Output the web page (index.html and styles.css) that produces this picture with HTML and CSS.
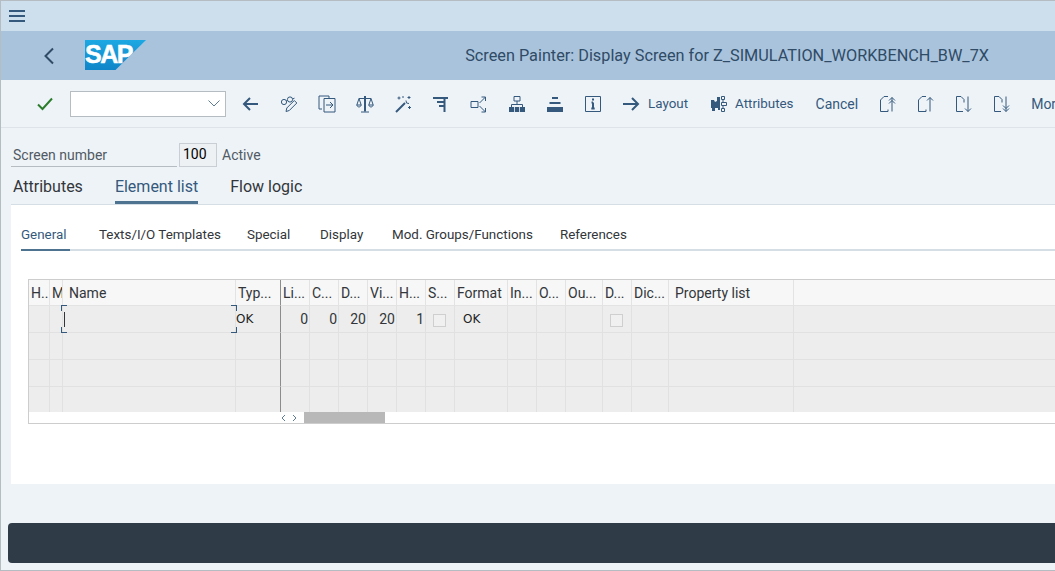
FILE: index.html
```html
<!DOCTYPE html>
<html lang="en">
<head>
  <meta charset="UTF-8" />
  <title>Screen Painter</title>
  <link rel="stylesheet" href="styles.css">
</head>
<body>

  <div class="menu-bar">
    <svg class="hamburger" width="16" height="12" viewBox="0 0 16 12"><path d="M0 1h16M0 6h16M0 11h16" /></svg>
  </div>

  <div class="title-bar">
    <svg class="nav-back" width="12" height="18" viewBox="0 0 12 18"><path d="M10 1.5 2.5 9l7.5 7.5" /></svg>
    <div class="logo"><span>SAP</span></div>
    <div class="title">Screen Painter: Display Screen for Z_SIMULATION_WORKBENCH_BW_7X</div>
  </div>

  <div class="toolbar">
    <svg class="tool-check" width="16" height="14" viewBox="0 0 16 14"><path d="M1 7.500 5.500 12 15 1.500" /></svg>
    <div class="command">
      <svg width="12" height="7" viewBox="0 0 12 7"><path d="M.5.5 6 6l5.500-5.500" /></svg>
    </div>

    <div class="tool"><svg class="icon" viewBox="0 0 18 18"><path class="bold" d="M16 9H2M8 3 2 9l6 6" /></svg></div>
    <div class="tool"><svg class="icon" viewBox="0 0 18 18"><circle cx="4" cy="7" r="2.600" /><circle cx="10" cy="4.500" r="2.600" /><path d="M6.400 5.800 7.600 5.400M12.500 4l2-.8M6 16.500l.8-3.500 7.500-7.500 2.500 2.500L9.300 15.500z" /></svg></div>
    <div class="tool"><svg class="icon" viewBox="0 0 18 18"><path d="M11 3.500V1H1v13h3M6 3.500h11V17H6zM8 10h7M12 7l3 3-3 3" /></svg></div>
    <div class="tool"><svg class="icon" viewBox="0 0 18 18"><path d="M5 17h8M3 3.500h12M3 3.500.8 10h4.400zM15 3.500 12.800 10h4.400zM.8 10c.5 2.600 3.900 2.600 4.400 0M12.800 10c.5 2.600 3.900 2.600 4.400 0" /><path class="bold" d="M9 1v15.500" /></svg></div>
    <div class="tool"><svg class="icon" viewBox="0 0 18 18"><path class="bold" d="M2 17 11 8" /><path d="M12 5.500 12.500 8 15 8.500M5 1.500v3M3.500 3h3M15 1v3M13.500 2.500h3M15.500 11v3M14 12.500h3M9 1v2" /></svg></div>
    <div class="tool"><svg class="icon" viewBox="0 0 18 18"><path class="bold" d="M1 3h15M5 7h7M7 11h5M12.500 3v14" /></svg></div>
    <div class="tool"><svg class="icon" viewBox="0 0 18 18"><path d="M1 6.500h7v6H1zM9.500 8 15.500 2M11.500 2h4v4M9.500 11l6 6M11.500 17h4v-4" /></svg></div>
    <div class="tool"><svg class="icon" viewBox="0 0 18 18"><path d="M6 1.500h6v4.500H6zM9 6v3.500M3.500 12V9.500h11V12" /><path class="fill" d="M1 12h5v5H1zM6.800 12h4.400v5H6.800zM12 12h5v5h-5z" /></svg></div>
    <div class="tool"><svg class="icon" viewBox="0 0 18 18"><path class="bold" d="M6 3h6M3.500 8h11" /><path class="fill" d="M1 12h16v5H1z" /></svg></div>
    <div class="tool"><svg class="icon" viewBox="0 0 18 18"><path d="M1.500 1.500h15v15h-15z" /><path class="bold" d="M9 7.500v6M7.300 13.500h3.400M7.500 7.500H9M9 3.500v2" /></svg></div>

    <div class="tool tool-text layout-btn"><svg class="icon" viewBox="0 0 18 18"><path class="bold" d="M1 9h15M10 3l6 6-6 6" /></svg><span>Layout</span></div>
    <div class="tool tool-text attr-btn"><svg class="icon" viewBox="0 0 18 18"><path class="fill" d="M1 5h3l1 2 2-1V2h3v13H8v-2H5v3H2v-3H1z" /><path d="M11.500 1.500h3v3h-3zM13 5v2M11.500 7.500h5v3h-5zM13 11v2M11.500 13.500h3v3h-3z" /></svg><span>Attributes</span></div>
    <div class="tool tool-text cancel-btn"><span>Cancel</span></div>

    <div class="tool page-btn"><svg class="icon" viewBox="0 0 18 18"><path d="M5 1.500h4M5 1.500 1.500 5v11.500H9v-2" /><path d="M13 16.500V2.500M10 5.500l3-3 3 3M10 8.500l3-3 3 3" /></svg></div>
    <div class="tool"><svg class="icon" viewBox="0 0 18 18"><path d="M5 1.500h4M5 1.500 1.500 5v11.500H9v-2" /><path d="M13 16.500V2.500M10 5.500l3-3 3 3" /></svg></div>
    <div class="tool"><svg class="icon" viewBox="0 0 18 18"><path d="M1.500 1.500H6L9 4.500v3M1.500 1.500v15H8" /><path d="M13 1.500v15M10 13.500l3 3 3-3" /></svg></div>
    <div class="tool"><svg class="icon" viewBox="0 0 18 18"><path d="M1.500 1.500H6L9 4.500v3M1.500 1.500v15H8" /><path d="M13 1.500v15M10 13.500l3 3 3-3M10 10.500l3 3 3-3" /></svg></div>
    <div class="tool tool-text more-btn"><span>More</span></div>
  </div>

  <div class="content">
    <div class="screen-row">
      <label class="screen-label">Screen number</label>
      <div class="screen-value">100</div>
      <span class="screen-status">Active</span>
    </div>

    <div class="tabs">
      <div class="tab">Attributes</div>
      <div class="tab active">Element list</div>
      <div class="tab">Flow logic</div>
    </div>

    <div class="panel">
      <div class="subtabs">
        <div class="subtab active">General</div>
        <div class="subtab">Texts/I/O Templates</div>
        <div class="subtab">Special</div>
        <div class="subtab">Display</div>
        <div class="subtab">Mod. Groups/Functions</div>
        <div class="subtab">References</div>
      </div>

      <div class="grid-wrap">
        <table class="grid">
          <colgroup>
            <col class="w21"><col class="w13"><col class="w173"><col class="w45">
            <col class="w29"><col class="w29"><col class="w29"><col class="w29"><col class="w29"><col class="w29">
            <col class="w53"><col class="w29"><col class="w29"><col class="w37"><col class="w29"><col class="w37"><col class="w125"><col class="w262">
          </colgroup>
          <thead>
            <tr>
              <th class="clip">H..</th><th class="clip">M</th><th class="name-head">Name</th><th class="fixed-end">Typ...</th>
              <th>Li...</th><th>C...</th><th>D...</th><th>Vi...</th><th>H...</th><th>S...</th>
              <th>Format</th><th>In...</th><th>O...</th><th>Ou...</th><th>D...</th><th>Dic...</th><th class="name-head">Property list</th><th></th>
            </tr>
          </thead>
          <tbody>
            <tr>
              <td></td><td></td>
              <td class="focus"><i class="caret"></i><b class="c tl"></b><b class="c tr"></b><b class="c bl"></b><b class="c br"></b></td>
              <td class="fixed-end code">OK</td>
              <td class="num">0</td><td class="num">0</td><td class="num">20</td><td class="num">20</td><td class="num">1</td>
              <td class="chk"><span class="checkbox"></span></td>
              <td class="code fmt">OK</td><td></td><td></td><td></td>
              <td class="chk"><span class="checkbox"></span></td>
              <td></td><td></td><td></td>
            </tr>
            <tr><td></td><td></td><td></td><td class="fixed-end"></td><td></td><td></td><td></td><td></td><td></td><td></td><td></td><td></td><td></td><td></td><td></td><td></td><td></td><td></td></tr>
            <tr><td></td><td></td><td></td><td class="fixed-end"></td><td></td><td></td><td></td><td></td><td></td><td></td><td></td><td></td><td></td><td></td><td></td><td></td><td></td><td></td></tr>
            <tr class="short"><td></td><td></td><td></td><td class="fixed-end"></td><td></td><td></td><td></td><td></td><td></td><td></td><td></td><td></td><td></td><td></td><td></td><td></td><td></td><td></td></tr>
          </tbody>
        </table>
        <div class="hscroll">
          <svg class="scroll-arrows" width="18" height="8" viewBox="0 0 18 8"><path d="M5 1 2 4l3 3M13 1l3 3-3 3" /></svg>
          <div class="thumb"></div>
        </div>
      </div>
    </div>
  </div>

  <div class="footer-wrap">
    <div class="footer"></div>
  </div>

</body>
</html>
```

FILE: styles.css
```css
html, body {
  margin: 0;
  height: 571px;
  overflow: hidden;
}

body {
  font-family: Roboto, Arial, sans-serif;
  font-size: 14px;
  color: #32363a;
  background-color: #eef3f8;
  box-sizing: border-box;
  border-top: 1px solid #b5bcc2;
  border-left: 1px solid #b5bcc2;
  border-bottom: 1px solid #b5bcc2;
}

/* shell */
.menu-bar {
  height: 30px;
  background-color: #cddeed;
  display: flex;
  align-items: center;
  padding-left: 8px;
}

.hamburger path {
  fill: none;
  stroke: #34597c;
  stroke-width: 2;
}

.title-bar {
  height: 49px;
  background-color: #a9c3dc;
  display: flex;
  align-items: center;
}

.nav-back {
  margin-left: 42px;
}

.nav-back path {
  fill: none;
  stroke: #2f4b66;
  stroke-width: 2;
}

.logo {
  width: 61px;
  height: 30px;
  margin-left: 30px;
  margin-top: -1px;
  background: linear-gradient(#1ca8e3, #0f85c8);
  clip-path: polygon(0 0, 100% 0, 50% 100%, 0 100%);
  color: white;
  font-family: "Liberation Sans", Arial, sans-serif;
  font-weight: bold;
  font-size: 25px;
  line-height: 29px;
  letter-spacing: -1.5px;
  -webkit-text-stroke: 0.5px white;
}

.title {
  margin-left: auto;
  margin-right: 66px;
  font-size: 16.25px;
  color: #2f4b66;
}

/* toolbar */
.toolbar {
  height: 47px;
  display: flex;
  align-items: center;
  border-bottom: 1px solid #dde3e9;
  white-space: nowrap;
  overflow: hidden;
  color: #34597c;
}

.tool-check {
  margin-left: 36px;
  flex: none;
}

.tool-check path {
  fill: none;
  stroke: #2b7d2b;
  stroke-width: 2;
}

.command {
  flex: none;
  height: 24px;
  width: 149px;
  margin-left: 17px;
  margin-right: 6px;
  background-color: white;
  border: 1px solid #b5bcc2;
  display: flex;
  align-items: center;
  justify-content: flex-end;
  padding-right: 5px;
}

.command path {
  fill: none;
  stroke: #5d7a96;
}

.tool {
  flex: none;
  width: 38px;
  display: flex;
  justify-content: center;
  align-items: center;
}

.icon {
  width: 18px;
  height: 18px;
  flex: none;
}

.icon path, .icon circle {
  fill: none;
  stroke: #34597c;
  stroke-width: 1;
}

.icon .bold {
  stroke-width: 2;
}

.icon .fill {
  fill: #34597c;
  stroke: none;
}

.tool-text {
  width: auto;
  gap: 8px;
  color: #34597c;
  font-size: 13.4px;
}

.layout-btn {
  margin-left: 10px;
}

.attr-btn {
  margin-left: 22px;
  gap: 7px;
}

.cancel-btn {
  margin-left: 22px;
  font-size: 14px;
}

.page-btn {
  margin-left: 11px;
}

.more-btn {
  margin-left: 10px;
  font-size: 14px;
}

/* screen header */
.content {
  padding-left: 10px;
}

.screen-row {
  display: flex;
  align-items: stretch;
  height: 24px;
  margin-top: 15px;
}

.screen-label {
  width: 166px;
  padding-left: 2px;
  box-sizing: border-box;
  border-bottom: 1px solid #b5bcc2;
  color: #515a63;
  line-height: 24px;
}

.screen-value {
  width: 38px;
  margin-left: 2px;
  box-sizing: border-box;
  border: 1px solid #c8ced4;
  background-color: #eef1f4;
  color: #000;
  padding-left: 3px;
  line-height: 20px;
}

.screen-status {
  margin-left: 5px;
  color: #515a63;
  line-height: 24px;
}

.tabs {
  display: flex;
  height: 37px;
  gap: 32px;
  padding-left: 2px;
}

.tab {
  font-size: 16px;
  line-height: 39px;
  height: 37px;
  box-sizing: border-box;
}

.tab.active {
  color: #34597c;
  border-bottom: 3px solid #4d7390;
}

/* tab panel */
.panel {
  background-color: white;
  height: 279px;
  border-top: 1px solid #d5dde5;
  overflow: hidden;
}

.subtabs {
  display: grid;
  grid-template-columns: 78px 148px 73px 72px 168px auto;
  height: 44px;
  margin-left: 10px;
  border-bottom: 2px solid #d5dde5;
  font-size: 13.4px;
}

.subtab {
  line-height: 60px;
  height: 46px;
  box-sizing: border-box;
}

.subtab.active {
  width: 49px;
  color: #34597c;
  border-bottom: 2px solid #4d7390;
}

.grid-wrap {
  margin-top: 28px;
  margin-left: 17px;
  width: 1100px;
  border: 1px solid #cdcdcd;
  border-right: none;
  box-sizing: border-box;
}

.grid {
  border-collapse: separate;
  border-spacing: 0;
  table-layout: fixed;
  width: 1026px;
  font-size: 14px;
}

.w21 { width: 21px; }
.w13 { width: 13px; }
.w173 { width: 173px; }
.w45 { width: 45px; }
.w29 { width: 29px; }
.w53 { width: 53px; }
.w37 { width: 37px; }
.w125 { width: 125px; }
.w262 { width: 262px; }

.grid th {
  height: 26px;
  padding: 1px 0 0 2px;
  box-sizing: border-box;
  background-color: #f7f7f7;
  border-right: 1px solid #e3e3e3;
  border-bottom: 1px solid #e3e3e3;
  font-weight: normal;
  text-align: left;
  white-space: nowrap;
  overflow: hidden;
  color: #32363a;
}

.grid th.name-head {
  padding-left: 6px;
}

.grid td {
  height: 27px;
  padding: 0;
  box-sizing: border-box;
  background-color: #ededed;
  border-right: 1px solid #e1e1e1;
  border-bottom: 1px solid #e1e1e1;
  color: #32363a;
}

.grid .short td {
  height: 25px;
  border-bottom: none;
}

.grid .fixed-end {
  border-right: 1px solid #8c8c8c;
}

.grid .num {
  text-align: right;
  padding-right: 1px;
}

.grid .code {
  font-size: 12px;
  font-family: "DejaVu Sans", Arial, sans-serif;
  color: #222;
}

.grid .fmt {
  padding-left: 8px;
}

.grid .chk {
  text-align: center;
}

.checkbox {
  display: inline-block;
  width: 11px;
  height: 11px;
  margin-right: 2px;
  vertical-align: middle;
  background-color: #f0f0f0;
  border: 1px solid #cfcfcf;
}

/* focus frame in the name cell */
.focus {
  position: relative;
}

.caret {
  position: absolute;
  left: 1px;
  top: 6px;
  width: 1px;
  height: 15px;
  background-color: #32363a;
}

.c {
  position: absolute;
  width: 5px;
  height: 5px;
  border: 0 solid #34597c;
}

.tl { left: -2px; top: -1px; border-top-width: 1px; border-left-width: 1px; }
.tr { right: -2px; top: -1px; border-top-width: 1px; border-right-width: 1px; }
.bl { left: -2px; bottom: -1px; border-bottom-width: 1px; border-left-width: 1px; }
.br { right: -2px; bottom: -1px; border-bottom-width: 1px; border-right-width: 1px; }

.hscroll {
  height: 11px;
  display: flex;
  align-items: stretch;
  padding-left: 251px;
  background-color: white;
}

.scroll-arrows {
  margin-top: 2px;
}

.scroll-arrows path {
  fill: none;
  stroke: #5d7a96;
}

.thumb {
  width: 81px;
  margin-left: 6px;
  background-color: #b8b8b8;
}

/* footer */
.footer-wrap {
  padding: 39px 0 0 7px;
}

.footer {
  height: 40px;
  background-color: #2f3c48;
  border-radius: 4px 0 0 4px;
}
```
